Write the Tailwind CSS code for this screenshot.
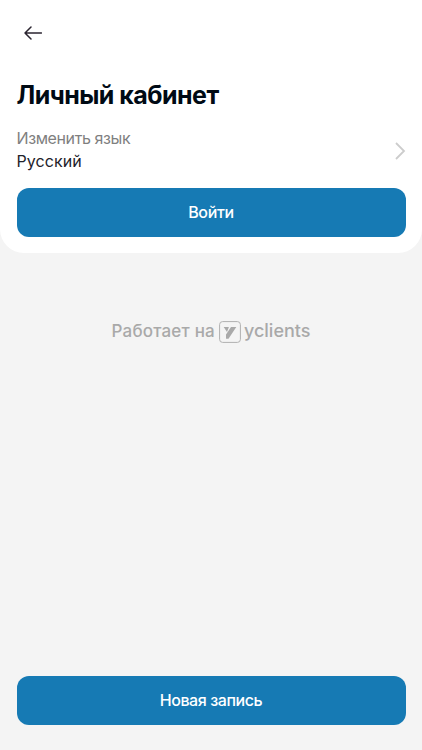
<!DOCTYPE html>
<html lang="ru"><head><meta charset="utf-8"><script src="https://cdn.jsdelivr.net/npm/@tailwindcss/browser@4"></script></head>
<body class="bg-[#f4f4f4]">
<div class="w-[422px] h-[750px] flex flex-col font-['Inter',sans-serif] text-[#000a14] overflow-hidden">
<main class="bg-white rounded-b-[24px] h-[252.5px] px-[16.5px] pt-6 shrink-0">
<button class="block ml-[7px] w-[18px] h-[18px]"><svg width="18" height="18" viewBox="0 0 18 18" fill="none" stroke="#2b2530" stroke-width="1.5" stroke-linecap="round" stroke-linejoin="round"><path d="M17.5 9H1M7 3 1 9l6 6"/></svg></button>
<h1 class="mt-[37px] h-8 leading-8 text-[25px] font-bold tracking-[-0.54px] whitespace-nowrap">Личный кабинет</h1>
<div class="mt-4 h-[46px] flex items-center justify-between">
<div class="text-[16px] leading-[23px]"><p class="text-[#7f7f7f] tracking-[-0.4px]">Изменить язык</p><p class="text-[#22222a] tracking-[0.08px]">Русский</p></div>
<svg class="mt-0.5" width="12" height="18" viewBox="0 0 12 18" fill="none" stroke="#ccc" stroke-width="1.8"><path d="m2 1 8 8-8 8"/></svg>
</div>
<button class="mt-[14.5px] block w-full h-[49px] pb-px rounded-[12px] bg-[#167ab4] text-white text-[16px] tracking-[-0.35px] font-medium">Войти</button>
</main>
<div class="mt-[67px] h-6 flex items-center justify-center text-[#a9a9a9] text-[17px] font-medium whitespace-nowrap"><span class="tracking-[0.2px]">Работает на</span>
<svg class="ml-1 mr-[3px]" width="22" height="22" viewBox="0 0 22 22" fill="none"><rect x=".6" y=".6" width="20.8" height="20.8" rx="3" stroke="#b0b0b0"/><path d="M4.7 6h5.2L8 11ZM12 6h5.3L9.5 17.8H7V13.4Z" fill="#a9a9a9"/></svg><span class="text-[18px] pb-0.5">yclients</span></div>
<footer class="mt-auto px-[16.5px] pb-[25px]"><button class="block w-full h-[49px] pb-px rounded-[12px] bg-[#167ab4] text-white text-[16px] tracking-[-0.42px] font-medium">Новая запись</button></footer>
</div></body></html>
